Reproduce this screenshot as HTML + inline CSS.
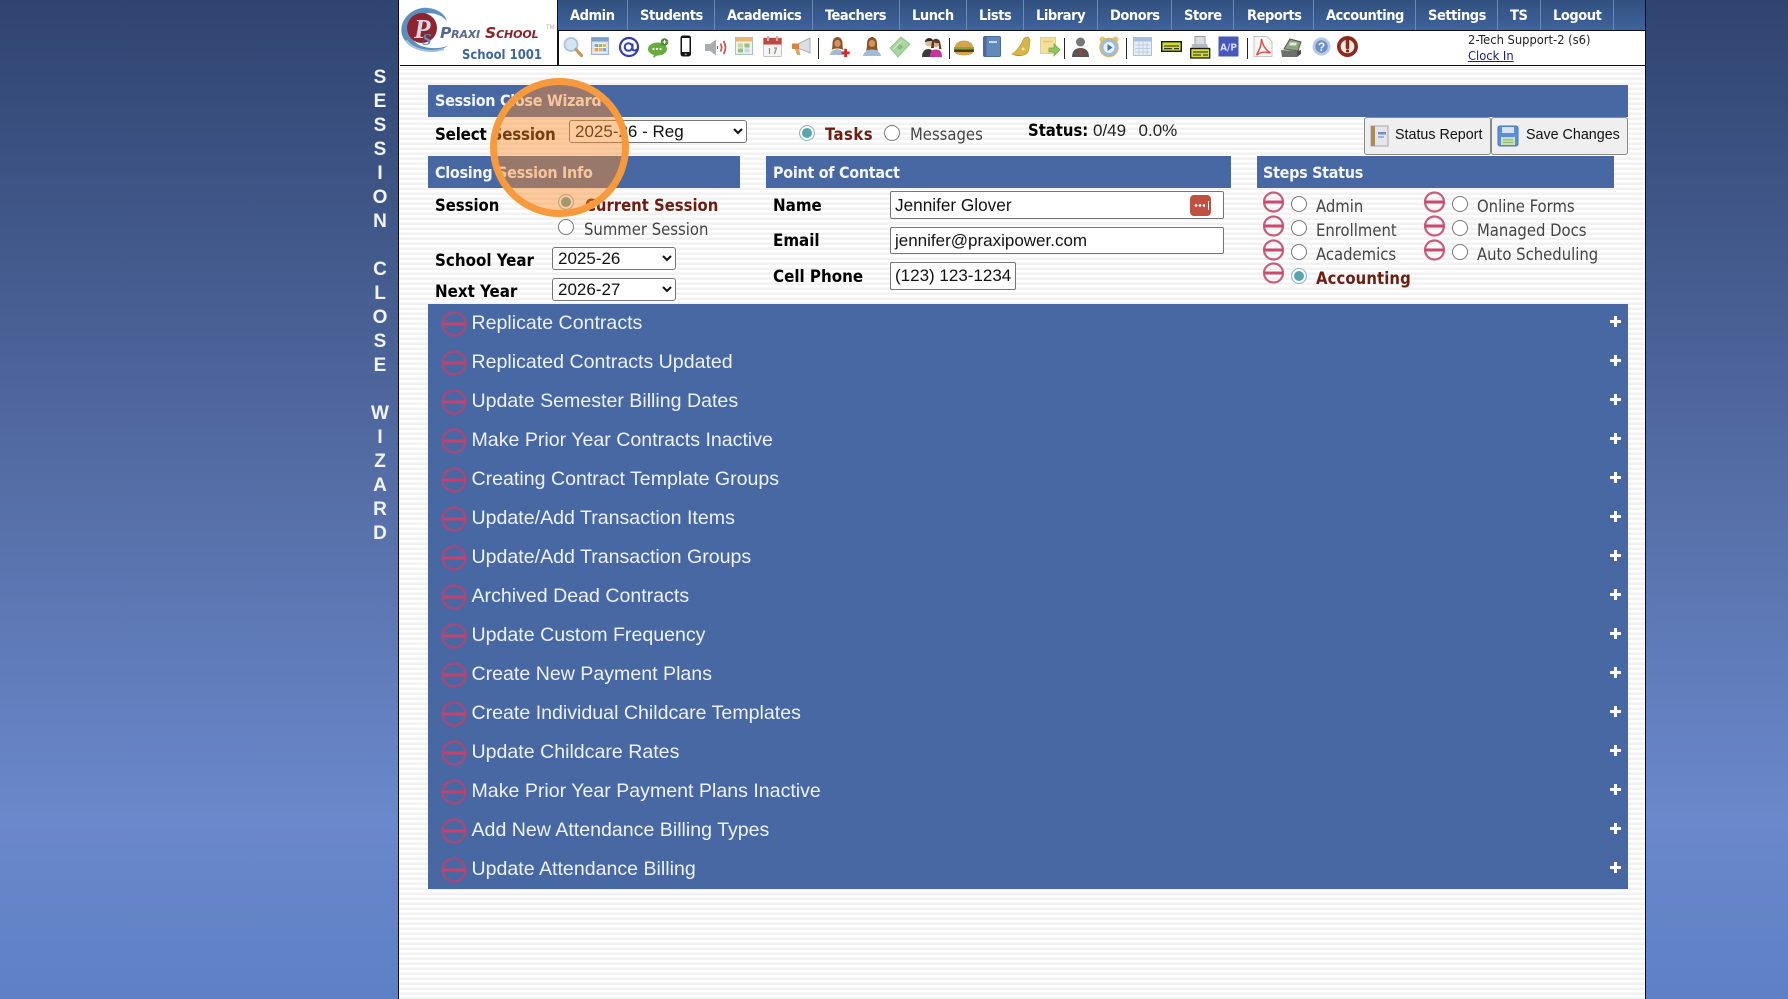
<!DOCTYPE html>
<html><head><meta charset="utf-8"><title>Session Close Wizard</title>
<style>
html,body{margin:0;padding:0;width:1788px;height:999px;overflow:hidden}
body{position:relative;font-family:"Liberation Sans",sans-serif;background:linear-gradient(#2f4470 0,#566fa8 500px,#6a88cb 820px,#5f80c6 999px)}
#main{position:absolute;box-sizing:border-box;left:398px;top:0;width:1248px;height:999px;border-left:1.5px solid #0c0c14;border-right:1.5px solid #0c0c14;background:repeating-linear-gradient(#fff 0,#fff 2.5px,#f2f2f3 2.5px,#f2f2f3 5px)}
.a{position:absolute;white-space:pre;line-height:20px}
.b{font-family:"DejaVu Sans",sans-serif;font-stretch:condensed;font-weight:bold}
.t{font-family:"DejaVu Sans",sans-serif;font-stretch:condensed}
.nav{color:#fff;font-size:14.5px;top:6px;letter-spacing:-.45px}
.bar{position:absolute;background:#4868a3;height:32px}
.h{color:#f2f5fa;font-size:16px;letter-spacing:-.3px}
.l{color:#000;font-size:16.8px}
.g{color:#444;font-size:16.5px}
.r{color:#6b1d10;font-size:16.5px}
.rd{position:absolute;width:14px;height:14px;border:1.5px solid #777;border-radius:50%;background:#fff}
.rd.c{border-color:#8fb7bd;background:#5aa5ad;box-shadow:inset 0 0 0 2px #fff}
select{position:absolute;box-sizing:border-box;font:17px "Liberation Sans",sans-serif;color:#111;background:#fff;border:1px solid #767676;border-radius:3px;padding:0 0 0 1px;margin:0}
.in{position:absolute;box-sizing:border-box;background:#fff;border:1px solid #767676;border-radius:2px;font-size:17px;color:#111;line-height:26px;padding-left:4px;white-space:pre}
.btn{position:absolute;box-sizing:border-box;top:117px;height:38px;background:#efefef;border:1px solid #8a8a8a;border-radius:3px;font-size:14.3px;color:#111;line-height:35px}
#list{position:absolute;left:428px;top:304px;width:1200px;height:585px;background:#4868a3}
.row{position:absolute;left:0;width:1200px;height:39px}
.row span{position:absolute;left:43.5px;top:4.5px;color:#eef2f9;font-size:19.58px;line-height:28px;white-space:pre}
.row svg{position:absolute;left:12.5px;top:6.5px}
.row i{position:absolute;left:1182px;top:12px;width:11px;height:11px;background:linear-gradient(#fff,#fff) 4px 0/3px 11px no-repeat,linear-gradient(#fff,#fff) 0 4px/11px 3px no-repeat}
.vt{position:absolute;left:360px;top:66px;width:40px;text-align:center;color:#f1f4fb;font:bold 19px/24px "Liberation Sans",sans-serif}
</style></head><body>

<div class="vt">S<br>E<br>S<br>S<br>I<br>O<br>N<br>&nbsp;<br>C<br>L<br>O<br>S<br>E<br>&nbsp;<br>W<br>I<br>Z<br>A<br>R<br>D</div>

<div id="main"></div>

<!-- header white strip -->
<div style="position:absolute;left:399.5px;top:0;width:1245px;height:65px;background:#fff;border-bottom:1.5px solid #0c0c14"></div>
<div style="position:absolute;left:557px;top:0;width:1.5px;height:65px;background:#111"></div>
<div style="position:absolute;left:558px;top:0;width:1086.5px;height:30px;background:linear-gradient(#31507f,#3f639c);border-bottom:1.5px solid #111"></div>
<svg style="position:absolute;left:0;top:0" width="1788" height="31">
<g stroke="#6c8ab8" stroke-width="1"><path d="M627.5 0V30M714.5 0V30M812.5 0V30M899.5 0V30M966.5 0V30M1023.5 0V30M1097.5 0V30M1171.5 0V30M1233.5 0V30M1313.5 0V30M1415.5 0V30M1497.5 0V30M1540.5 0V30M1613.5 0V30"/></g>
</svg>
<div class="a b nav" style="left:570px">Admin</div>
<div class="a b nav" style="left:640px">Students</div>
<div class="a b nav" style="left:727px">Academics</div>
<div class="a b nav" style="left:825px">Teachers</div>
<div class="a b nav" style="left:912px">Lunch</div>
<div class="a b nav" style="left:979px">Lists</div>
<div class="a b nav" style="left:1036px">Library</div>
<div class="a b nav" style="left:1110px">Donors</div>
<div class="a b nav" style="left:1184px">Store</div>
<div class="a b nav" style="left:1247px">Reports</div>
<div class="a b nav" style="left:1326px">Accounting</div>
<div class="a b nav" style="left:1428px">Settings</div>
<div class="a b nav" style="left:1510px">TS</div>
<div class="a b nav" style="left:1553px">Logout</div>

<!-- logo -->
<svg style="position:absolute;left:400px;top:2px" width="157" height="62" viewBox="0 0 157 62">
<path d="M48 44C32 54 8 50 2 33C-2 17 14 4 28 6C38 7 45 12 47 19C40 11 28 9 18 14C7 20 7 36 19 43C28 47 38 47 48 44Z" fill="#5d8fbc"/>
<path d="M6 38C12 47 28 52 44 47" fill="none" stroke="#a5c0da" stroke-width="2"/>
<circle cx="22" cy="26" r="15" fill="#8e2430"/>
<text x="14" y="36" font-family="Liberation Serif,serif" font-style="italic" font-weight="bold" font-size="27" fill="#d9d6e2">P</text>
<text x="22" y="43" font-family="Liberation Serif,serif" font-style="italic" font-weight="bold" font-size="17" fill="#5d8fbc">S</text>
<text x="40" y="36" font-family="DejaVu Sans,sans-serif" font-style="italic" font-weight="bold" font-size="14" fill="#55668f" letter-spacing="-.2"><tspan font-size="15.5">P</tspan><tspan font-size="11">RAXI</tspan></text>
<text x="85" y="36" font-family="DejaVu Sans,sans-serif" font-style="italic" font-weight="bold" font-size="14" fill="#8c2128" letter-spacing="-.1"><tspan font-size="15.5">S</tspan><tspan font-size="11">CHOOL</tspan></text>
<text x="146" y="27" font-family="Liberation Sans,sans-serif" font-size="6" fill="#aaa">TM</text>
<text x="62" y="57" font-family="DejaVu Sans,sans-serif" font-stretch="condensed" font-weight="bold" font-size="13.5" fill="#3d6796" textLength="80" lengthAdjust="spacingAndGlyphs">School 1001</text>
</svg>

<!-- toolbar icons -->
<svg style="position:absolute;left:0;top:32px" width="1788" height="32" fill="none">
<g stroke="#222" stroke-width="1"><path d="M818.5 6V27M949.5 6V27M1064.5 6V27M1126.5 6V27M1247.5 6V27"/></g>
<!-- search -->
<g transform="translate(563,5)"><circle cx="8" cy="7.500" r="6.500" fill="#d4e3f3" stroke="#a9c2de" stroke-width="1.800"/><path d="M13 12.500L18.500 18.500" stroke="#c39a62" stroke-width="3.200" stroke-linecap="round"/></g>
<!-- grid -->
<g transform="translate(591,5)"><rect x=".5" y=".5" width="17" height="17" fill="#d8e2ef" stroke="#9fb3cc"/><rect x=".5" y=".5" width="17" height="4" fill="#7f9fc4"/><rect x="3" y="6.500" width="12" height="9" fill="#fff"/><path d="M3.500 7h3.500v3H3.500z" fill="#7aa4d4"/><path d="M7.500 7H11v3H7.500z" fill="#8fbe6c"/><path d="M11.500 7H15v3h-3.500z" fill="#e0b35c"/><path d="M3.500 11H7v3.500H3.500z" fill="#e2a04c"/><path d="M7.500 11H11v3.500H7.500z" fill="#e0b35c"/><path d="M11.500 11H15v3.500h-3.500z" fill="#7aa4d4"/></g>
<!-- @ -->
<g transform="translate(619,4)" stroke="#3140ae"><circle cx="10" cy="11" r="9" stroke-width="2.200"/><circle cx="9.500" cy="11" r="3.800" stroke-width="2"/><path d="M13.500 7.500v5c0 2.500 3.500 2.500 4.800 .5" stroke-width="2"/></g>
<!-- chat -->
<g transform="translate(648,4)"><ellipse cx="9.500" cy="13" rx="9.500" ry="6.500" fill="#66ac3f"/><path d="M6 18l-1 4 6-3.500z" fill="#66ac3f"/><circle cx="5.500" cy="13" r="1.100" fill="#fff"/><circle cx="9" cy="13" r="1.100" fill="#fff"/><circle cx="12.500" cy="13" r="1.100" fill="#fff"/><circle cx="16.500" cy="6" r="3.800" fill="#4b8e30"/><path d="M14.500 6h4M16.500 4v4" stroke="#fff" stroke-width="1"/></g>
<!-- phone -->
<g transform="translate(680,3)"><rect x=".5" y=".5" width="10.500" height="21" rx="2.500" fill="#141414"/><rect x="2" y="3" width="7.500" height="14" fill="#fff"/><circle cx="5.700" cy="19.300" r="1" fill="#999"/></g>
<!-- speaker -->
<g transform="translate(705,7)"><path d="M0 5h5l6-4.500v16l-6-4.500H0z" fill="#a9afb0"/><path d="M12 8.500h1" stroke="#d23e34" stroke-width="3"/><path d="M15.500 4.500q2.200 4 0 8M18.500 2q4 6.500 0 13" stroke="#d05048" stroke-width="1.700"/></g>
<!-- calendar grid -->
<g transform="translate(735,5)"><rect x=".5" y=".5" width="17" height="17" fill="#f3f1e6" stroke="#a9bccf"/><rect x=".5" y=".5" width="17" height="4" fill="#e6b870"/><path d="M3 6.500h5v4H3z" fill="#c9d89e"/><path d="M9.500 6.500h5v4h-5zM3 11.500h5v4H3z" fill="#8fc084"/><path d="M9.500 11.500h5v4h-5z" fill="#c7d7e8"/></g>
<!-- calendar -->
<g transform="translate(763,4)"><rect x=".5" y="2" width="18" height="18.500" rx="1" fill="#f5f5f3" stroke="#c4c4c0"/><rect x=".5" y="2" width="18" height="6.500" fill="#c5443b"/><path d="M5 0v5M14 0v5" stroke="#b7b7b7" stroke-width="2.200"/><path d="M6.500 12v6M11 12l2.500 0-2 6" stroke="#8e8e8e" stroke-width="1.200"/></g>
<!-- megaphone -->
<g transform="translate(792,5)"><path d="M6 7l12-6v15L6 11z" fill="#dde0e2" stroke="#a9aeb2"/><path d="M0 6.500h7v5.500H0z" fill="#dd8246"/><path d="M3 12l2 6h3.500l-1.500-6z" fill="#d9a76a"/></g>
<!-- woman + -->
<g transform="translate(828,4)"><path d="M2 19c0-4 4-5.500 7-6 3 .5 7 2 7 6z" fill="#a3bad6"/><path d="M3.500 14C5 11 4 7 5 4.500 6 2 8 1 9.500 1S13 2 14 4.500C15 7 14 11 15.500 14 12 12 6 12 3.500 14z" fill="#8c5527"/><ellipse cx="9.500" cy="7.500" rx="3.200" ry="3.600" fill="#cd9360"/><path d="M13.500 15.500h8.200v2.800h-8.200zM16.200 12.800h2.800v8.200h-2.800z" fill="#d42a25"/></g>
<!-- woman -->
<g transform="translate(862,4)"><path d="M1 20c0-4 5-6 9-7 4 1 9 3 9 7z" fill="#a3bad6"/><path d="M4 15C5.500 11 4.500 7 5.500 4.500 6.500 2 8.500 1 10 1s3.500 1 4.500 3.500C15.500 7 14.500 11 16 15c-3.500-2-8.500-2-12 0z" fill="#8c5527"/><ellipse cx="10" cy="7.500" rx="3.200" ry="3.600" fill="#cd9360"/></g>
<!-- money -->
<g transform="translate(890,5)"><path d="M0 11L11 0l9 7L8 20z" fill="#a8d59e" stroke="#8cc083" stroke-width=".8"/><path d="M3 12.500L12.500 3" stroke="#cfe9c8"/><circle cx="10" cy="10" r="2.500" fill="#87bd7c"/></g>
<!-- people -->
<g transform="translate(922,5)"><circle cx="7" cy="5.500" r="4" fill="#e0bd98"/><path d="M3 5c0-5 8-5 8-1-3 0-5 0-8 1z" fill="#2b2b2b"/><circle cx="14" cy="6" r="4" fill="#d9aa82"/><path d="M9.500 7c0-7 9-7 9 0l1 5H17V6c-2 .5-4 0-5-1v6H9z" fill="#5f3b28"/><path d="M0 20c0-6 3-8 6.500-8 3 0 5 2 5 8z" fill="#3a3a3a"/><path d="M8 20c0-6 2.500-7.500 6-7.500s6 1.500 6 7.500z" fill="#c7359a"/></g>
<!-- burger -->
<g transform="translate(954,7)"><path d="M1 8C1-.5 19-.5 19 8z" fill="#d4a34e"/><rect x="0" y="8" width="20" height="2.500" fill="#7fa83f"/><rect x="0" y="10.500" width="20" height="2.500" fill="#5d3418"/><path d="M1 13h18c0 4.500-18 4.500-18 0z" fill="#d4a34e"/></g>
<!-- book -->
<g transform="translate(983,4)"><rect x=".5" y=".5" width="17" height="20" rx="1.500" fill="#6289bd" stroke="#4a6c9d"/><rect x=".5" y=".5" width="3" height="20" fill="#4a6c9d"/><rect x="6" y="5" width="8" height="2" fill="#cbd9ea"/></g>
<!-- bell -->
<g transform="translate(1011,4)"><path d="M17 1c1 1 2 2 2 3-1 5 0 8-2 12-3 4-10 5-16 2C6 15 10 9 12 4c1-2 3-3 5-3z" fill="#d6b648" stroke="#b89a33" stroke-width=".7"/><path d="M5 19c1 1.500 3 1.500 4 0z" fill="#a88c30"/><circle cx="12" cy="13" r="1.500" fill="#eedf9a"/></g>
<!-- note -->
<g transform="translate(1040,5)"><rect x=".5" y=".5" width="15" height="16" fill="#f4e09a" stroke="#d8d29e"/><path d="M3 4.500h9" stroke="#e3c865" stroke-width="1.500"/><path d="M9 11h5V7l6 5.800L14 19v-4H9z" fill="#8ec45e" stroke="#6ea343" stroke-width=".7"/></g>
<!-- man -->
<g transform="translate(1071,4)"><circle cx="9.500" cy="6" r="4.500" fill="#777"/><path d="M1 21c0-6 3-9 8.500-9s8.500 3 8.500 9z" fill="#565656"/><path d="M7.500 12.500h4l-1 1.500 1 5-1.500 2-1.500-2 1-5z" fill="#b33a3a"/></g>
<!-- clock -->
<g transform="translate(1099,4)"><circle cx="3.500" cy="3.500" r="3" fill="#e0c27a"/><circle cx="16.500" cy="3.500" r="3" fill="#e0c27a"/><circle cx="10" cy="11.500" r="9" fill="#9abde0" stroke="#d5b76a" stroke-width="1.500"/><circle cx="10" cy="11.500" r="5.500" fill="#e9f0f8"/><path d="M8.500 8l5 3.500-5 3.500z" fill="#4a76ac"/></g>
<!-- calculator/table -->
<g transform="translate(1133,5)"><rect x=".5" y=".5" width="18" height="18" fill="#e5edf7" stroke="#aec0d8"/><rect x=".5" y=".5" width="18" height="4" fill="#a9bfdc"/><path d="M2 8h15M2 11.500h15M2 15h15M6 5v13M10 5v13M14 5v13" stroke="#b4c6de" stroke-width=".8"/></g>
<!-- check -->
<g transform="translate(1161,9)"><rect x=".7" y=".7" width="19.600" height="9.600" fill="#d3dc34" stroke="#181818" stroke-width="1.400"/><path d="M3 5h15M3 7.700h8M13 7.700h5" stroke="#222" stroke-width="1.100"/></g>
<!-- printer -->
<g transform="translate(1190,4)"><rect x="5" y=".5" width="10" height="8" fill="#dcdcdc" stroke="#9a9a9a"/><path d="M2 8h15l2 6H1z" fill="#b2babf"/><rect x=".7" y="12.500" width="19" height="9.500" fill="#d3dc34" stroke="#181818" stroke-width="1.300"/><path d="M3 16h15M3 19h8M13 19h5" stroke="#222"/></g>
<!-- A/P -->
<g transform="translate(1218,4)"><rect x=".5" y=".5" width="20" height="20" fill="#4658b8"/><text x="10.500" y="14.500" text-anchor="middle" font-family="DejaVu Sans,sans-serif" font-stretch="condensed" font-weight="bold" font-size="10" fill="#d3daf5">A/P</text></g>
<!-- pdf -->
<g transform="translate(1253,4)"><path d="M1 .5h13l5 5v15H1z" fill="#f7f7f7" stroke="#c4c4c4"/><path d="M8.500 3c1.500 7 3.500 10 9 14-6-1.500-10-1-14 2 3-5 5-10 5-16z" stroke="#d9534a" stroke-width="1.500"/></g>
<!-- register -->
<g transform="translate(1281,5)"><path d="M3 12L9 2l11 3-3 9z" fill="#8aa67c" stroke="#555"/><path d="M0 13l16 1v6H1z" fill="#6e6e6e"/><path d="M16 14l4-1v4l-4 3z" fill="#4f4f4f"/><rect x="8.500" y="5.500" width="7" height="3" fill="#e2e8dc"/></g>
<!-- help -->
<g transform="translate(1312,5)"><circle cx="9.500" cy="9.500" r="9" fill="#b8cbe6"/><circle cx="9.500" cy="9.500" r="6.200" fill="#6a8fc6"/><text x="9.500" y="14" text-anchor="middle" font-family="Liberation Sans,sans-serif" font-weight="bold" font-size="12" fill="#eef3fa">?</text></g>
<!-- power -->
<g transform="translate(1337,4)"><circle cx="10.500" cy="10.500" r="10.500" fill="#8c2a1e"/><circle cx="10.500" cy="10.500" r="6.800" fill="#f3ece4"/><rect x="8.700" y="2.500" width="3.600" height="10.500" rx="1.400" fill="#8c2a1e"/><circle cx="10.500" cy="15" r="1.600" fill="#8c2a1e"/></g>
</svg>
<div class="a t" style="left:1468px;top:31px;font-size:12.8px;color:#222">2-Tech Support-2 (s6)</div>
<div class="a t" style="left:1468px;top:47px;font-size:12.8px;color:#1a1a8e;text-decoration:underline">Clock In</div>

<!-- Title bars -->
<div class="bar" style="left:428px;top:85px;width:1200px"></div>
<div class="bar" style="left:428px;top:156px;width:312px"></div>
<div class="bar" style="left:766px;top:156px;width:465px"></div>
<div class="bar" style="left:1257px;top:156px;width:357px"></div>
<div class="a b h" style="left:435px;top:91px">Session Close Wizard</div>
<div class="a b h" style="left:435px;top:163px">Closing Session Info</div>
<div class="a b h" style="left:773px;top:163px">Point of Contact</div>
<div class="a b h" style="left:1263px;top:163px">Steps Status</div>

<!-- Row 1 -->
<div class="a b l" style="left:435px;top:124px;letter-spacing:-.2px">Select Session</div>
<select style="left:569px;top:120px;width:178px;height:23px"><option>2025-26 - Reg</option></select>
<div class="rd c" style="left:799px;top:125px"></div>
<div class="a b r" style="left:825px;top:125px;letter-spacing:.5px">Tasks</div>
<div class="rd" style="left:884px;top:125px"></div>
<div class="a t g" style="left:910px;top:125px">Messages</div>
<div class="a b l" style="left:1028px;top:121px;font-size:16.5px">Status:</div>
<div class="a" style="left:1093px;top:121px;font-size:17px;color:#222;word-spacing:1.5px">0/49&nbsp; 0.0%</div>
<div class="btn" style="left:1364px;width:127px;padding-left:30px">Status Report</div>
<div class="btn" style="left:1491px;width:137px;padding-left:34px">Save Changes</div>
<svg style="position:absolute;left:1370px;top:124px" width="20" height="24"><rect x="1" y="2" width="17" height="20" fill="#e4e4ea" stroke="#a9a9a9"/><rect x="1" y="2" width="4" height="20" fill="#b08a58"/><rect x="8" y="8" width="8" height="2.5" fill="#6f8fc4"/><rect x="8" y="12" width="6" height="2" fill="#9fb3d6"/></svg>
<svg style="position:absolute;left:1497px;top:125px" width="22" height="22"><rect x="1" y="1" width="20" height="20" rx="2" fill="#5b8fd6" stroke="#4b79b8"/><rect x="5" y="2" width="12" height="6" fill="#d6e2f2"/><rect x="4" y="12" width="14" height="8" fill="#c9deb5"/><path d="M6 15h10M6 17.5h10" stroke="#8cb26e"/></svg>

<!-- Closing session -->
<div class="a b l" style="left:435px;top:196px;font-size:16.5px">Session</div>
<div class="rd c" style="left:558px;top:194px"></div>
<div class="a b r" style="left:585px;top:196px">Current Session</div>
<div class="rd" style="left:558px;top:219px"></div>
<div class="a t g" style="left:584px;top:220px">Summer Session</div>
<div class="a b l" style="left:435px;top:250px">School Year</div>
<select style="left:552px;top:247px;width:124px;height:23px"><option>2025-26</option></select>
<div class="a b l" style="left:435px;top:281px">Next Year</div>
<select style="left:552px;top:278px;width:124px;height:23px"><option>2026-27</option></select>

<!-- Contact -->
<div class="a b l" style="left:773px;top:195px">Name</div>
<div class="in" style="left:890px;top:191px;width:334px;height:28px;font-size:17.2px">Jennifer Glover</div>
<div style="position:absolute;left:1190px;top:195px;width:21px;height:21px;border-radius:4px;background:#c0503f"></div>
<div style="position:absolute;left:1194px;top:204px;width:11px;height:3px;background:radial-gradient(circle,#fff 1.2px,transparent 1.5px) 0 0/4px 3px"></div>
<div style="position:absolute;left:1208px;top:201px;width:1px;height:9px;background:#fff"></div>
<div class="a b l" style="left:773px;top:230px">Email</div>
<div class="in" style="left:890px;top:227px;width:334px;height:27px">jennifer@praxipower.com</div>
<div class="a b l" style="left:773px;top:265.5px">Cell Phone</div>
<div class="in" style="left:890px;top:262px;width:126px;height:28px">(123) 123-1234</div>

<!-- Steps -->
<svg style="position:absolute;left:0;top:0" width="1788" height="300" fill="none">
<g stroke="#c85c7c" stroke-width="2.2">
<circle cx="1273.5" cy="202" r="9.5"/><circle cx="1273.5" cy="226" r="9.5"/><circle cx="1273.5" cy="250" r="9.5"/><circle cx="1273.5" cy="273" r="9.5"/>
<circle cx="1434.5" cy="202" r="9.5"/><circle cx="1434.5" cy="226" r="9.5"/><circle cx="1434.5" cy="250" r="9.5"/>
</g>
<g stroke="#c84a70" stroke-width="3">
<path d="M1264 202h19M1264 226h19M1264 250h19M1264 273h19M1425 202h19M1425 226h19M1425 250h19"/>
</g>
</svg>
<div class="rd" style="left:1290.5px;top:196px"></div>
<div class="rd" style="left:1290.5px;top:220px"></div>
<div class="rd" style="left:1290.5px;top:244px"></div>
<div class="rd c" style="left:1290.5px;top:268px"></div>
<div class="rd" style="left:1451.5px;top:196px"></div>
<div class="rd" style="left:1451.5px;top:220px"></div>
<div class="rd" style="left:1451.5px;top:244px"></div>
<div class="a t g" style="left:1316px;top:197px">Admin</div>
<div class="a t g" style="left:1316px;top:221px">Enrollment</div>
<div class="a t g" style="left:1316px;top:245px">Academics</div>
<div class="a b r" style="left:1316px;top:269px;letter-spacing:.1px">Accounting</div>
<div class="a t g" style="left:1477px;top:197px">Online Forms</div>
<div class="a t g" style="left:1477px;top:221px">Managed Docs</div>
<div class="a t g" style="left:1477px;top:245px">Auto Scheduling</div>

<!-- List -->
<div id="list">
<div class="row" style="top:0"><svg width="26" height="26" fill="none"><circle cx="13" cy="13" r="11.5" stroke="#a34a7c" stroke-width="2.5"/><path d="M2 13h22" stroke="#c8406e" stroke-width="3"/></svg><span>Replicate Contracts</span><i></i></div>
<div class="row" style="top:39px"><svg width="26" height="26" fill="none"><circle cx="13" cy="13" r="11.5" stroke="#a34a7c" stroke-width="2.5"/><path d="M2 13h22" stroke="#c8406e" stroke-width="3"/></svg><span>Replicated Contracts Updated</span><i></i></div>
<div class="row" style="top:78px"><svg width="26" height="26" fill="none"><circle cx="13" cy="13" r="11.5" stroke="#a34a7c" stroke-width="2.5"/><path d="M2 13h22" stroke="#c8406e" stroke-width="3"/></svg><span>Update Semester Billing Dates</span><i></i></div>
<div class="row" style="top:117px"><svg width="26" height="26" fill="none"><circle cx="13" cy="13" r="11.5" stroke="#a34a7c" stroke-width="2.5"/><path d="M2 13h22" stroke="#c8406e" stroke-width="3"/></svg><span>Make Prior Year Contracts Inactive</span><i></i></div>
<div class="row" style="top:156px"><svg width="26" height="26" fill="none"><circle cx="13" cy="13" r="11.5" stroke="#a34a7c" stroke-width="2.5"/><path d="M2 13h22" stroke="#c8406e" stroke-width="3"/></svg><span>Creating Contract Template Groups</span><i></i></div>
<div class="row" style="top:195px"><svg width="26" height="26" fill="none"><circle cx="13" cy="13" r="11.5" stroke="#a34a7c" stroke-width="2.5"/><path d="M2 13h22" stroke="#c8406e" stroke-width="3"/></svg><span>Update/Add Transaction Items</span><i></i></div>
<div class="row" style="top:234px"><svg width="26" height="26" fill="none"><circle cx="13" cy="13" r="11.5" stroke="#a34a7c" stroke-width="2.5"/><path d="M2 13h22" stroke="#c8406e" stroke-width="3"/></svg><span>Update/Add Transaction Groups</span><i></i></div>
<div class="row" style="top:273px"><svg width="26" height="26" fill="none"><circle cx="13" cy="13" r="11.5" stroke="#a34a7c" stroke-width="2.5"/><path d="M2 13h22" stroke="#c8406e" stroke-width="3"/></svg><span>Archived Dead Contracts</span><i></i></div>
<div class="row" style="top:312px"><svg width="26" height="26" fill="none"><circle cx="13" cy="13" r="11.5" stroke="#a34a7c" stroke-width="2.5"/><path d="M2 13h22" stroke="#c8406e" stroke-width="3"/></svg><span>Update Custom Frequency</span><i></i></div>
<div class="row" style="top:351px"><svg width="26" height="26" fill="none"><circle cx="13" cy="13" r="11.5" stroke="#a34a7c" stroke-width="2.5"/><path d="M2 13h22" stroke="#c8406e" stroke-width="3"/></svg><span>Create New Payment Plans</span><i></i></div>
<div class="row" style="top:390px"><svg width="26" height="26" fill="none"><circle cx="13" cy="13" r="11.5" stroke="#a34a7c" stroke-width="2.5"/><path d="M2 13h22" stroke="#c8406e" stroke-width="3"/></svg><span>Create Individual Childcare Templates</span><i></i></div>
<div class="row" style="top:429px"><svg width="26" height="26" fill="none"><circle cx="13" cy="13" r="11.5" stroke="#a34a7c" stroke-width="2.5"/><path d="M2 13h22" stroke="#c8406e" stroke-width="3"/></svg><span>Update Childcare Rates</span><i></i></div>
<div class="row" style="top:468px"><svg width="26" height="26" fill="none"><circle cx="13" cy="13" r="11.5" stroke="#a34a7c" stroke-width="2.5"/><path d="M2 13h22" stroke="#c8406e" stroke-width="3"/></svg><span>Make Prior Year Payment Plans Inactive</span><i></i></div>
<div class="row" style="top:507px"><svg width="26" height="26" fill="none"><circle cx="13" cy="13" r="11.5" stroke="#a34a7c" stroke-width="2.5"/><path d="M2 13h22" stroke="#c8406e" stroke-width="3"/></svg><span>Add New Attendance Billing Types</span><i></i></div>
<div class="row" style="top:546px"><svg width="26" height="26" fill="none"><circle cx="13" cy="13" r="11.5" stroke="#a34a7c" stroke-width="2.5"/><path d="M2 13h22" stroke="#c8406e" stroke-width="3"/></svg><span>Update Attendance Billing</span><i></i></div>
</div>

<!-- highlight -->
<div style="position:absolute;left:490px;top:78px;width:125px;height:125px;border:7px solid #f79a3e;border-radius:50%;background:rgba(250,140,40,.45)"></div>
</body></html>
